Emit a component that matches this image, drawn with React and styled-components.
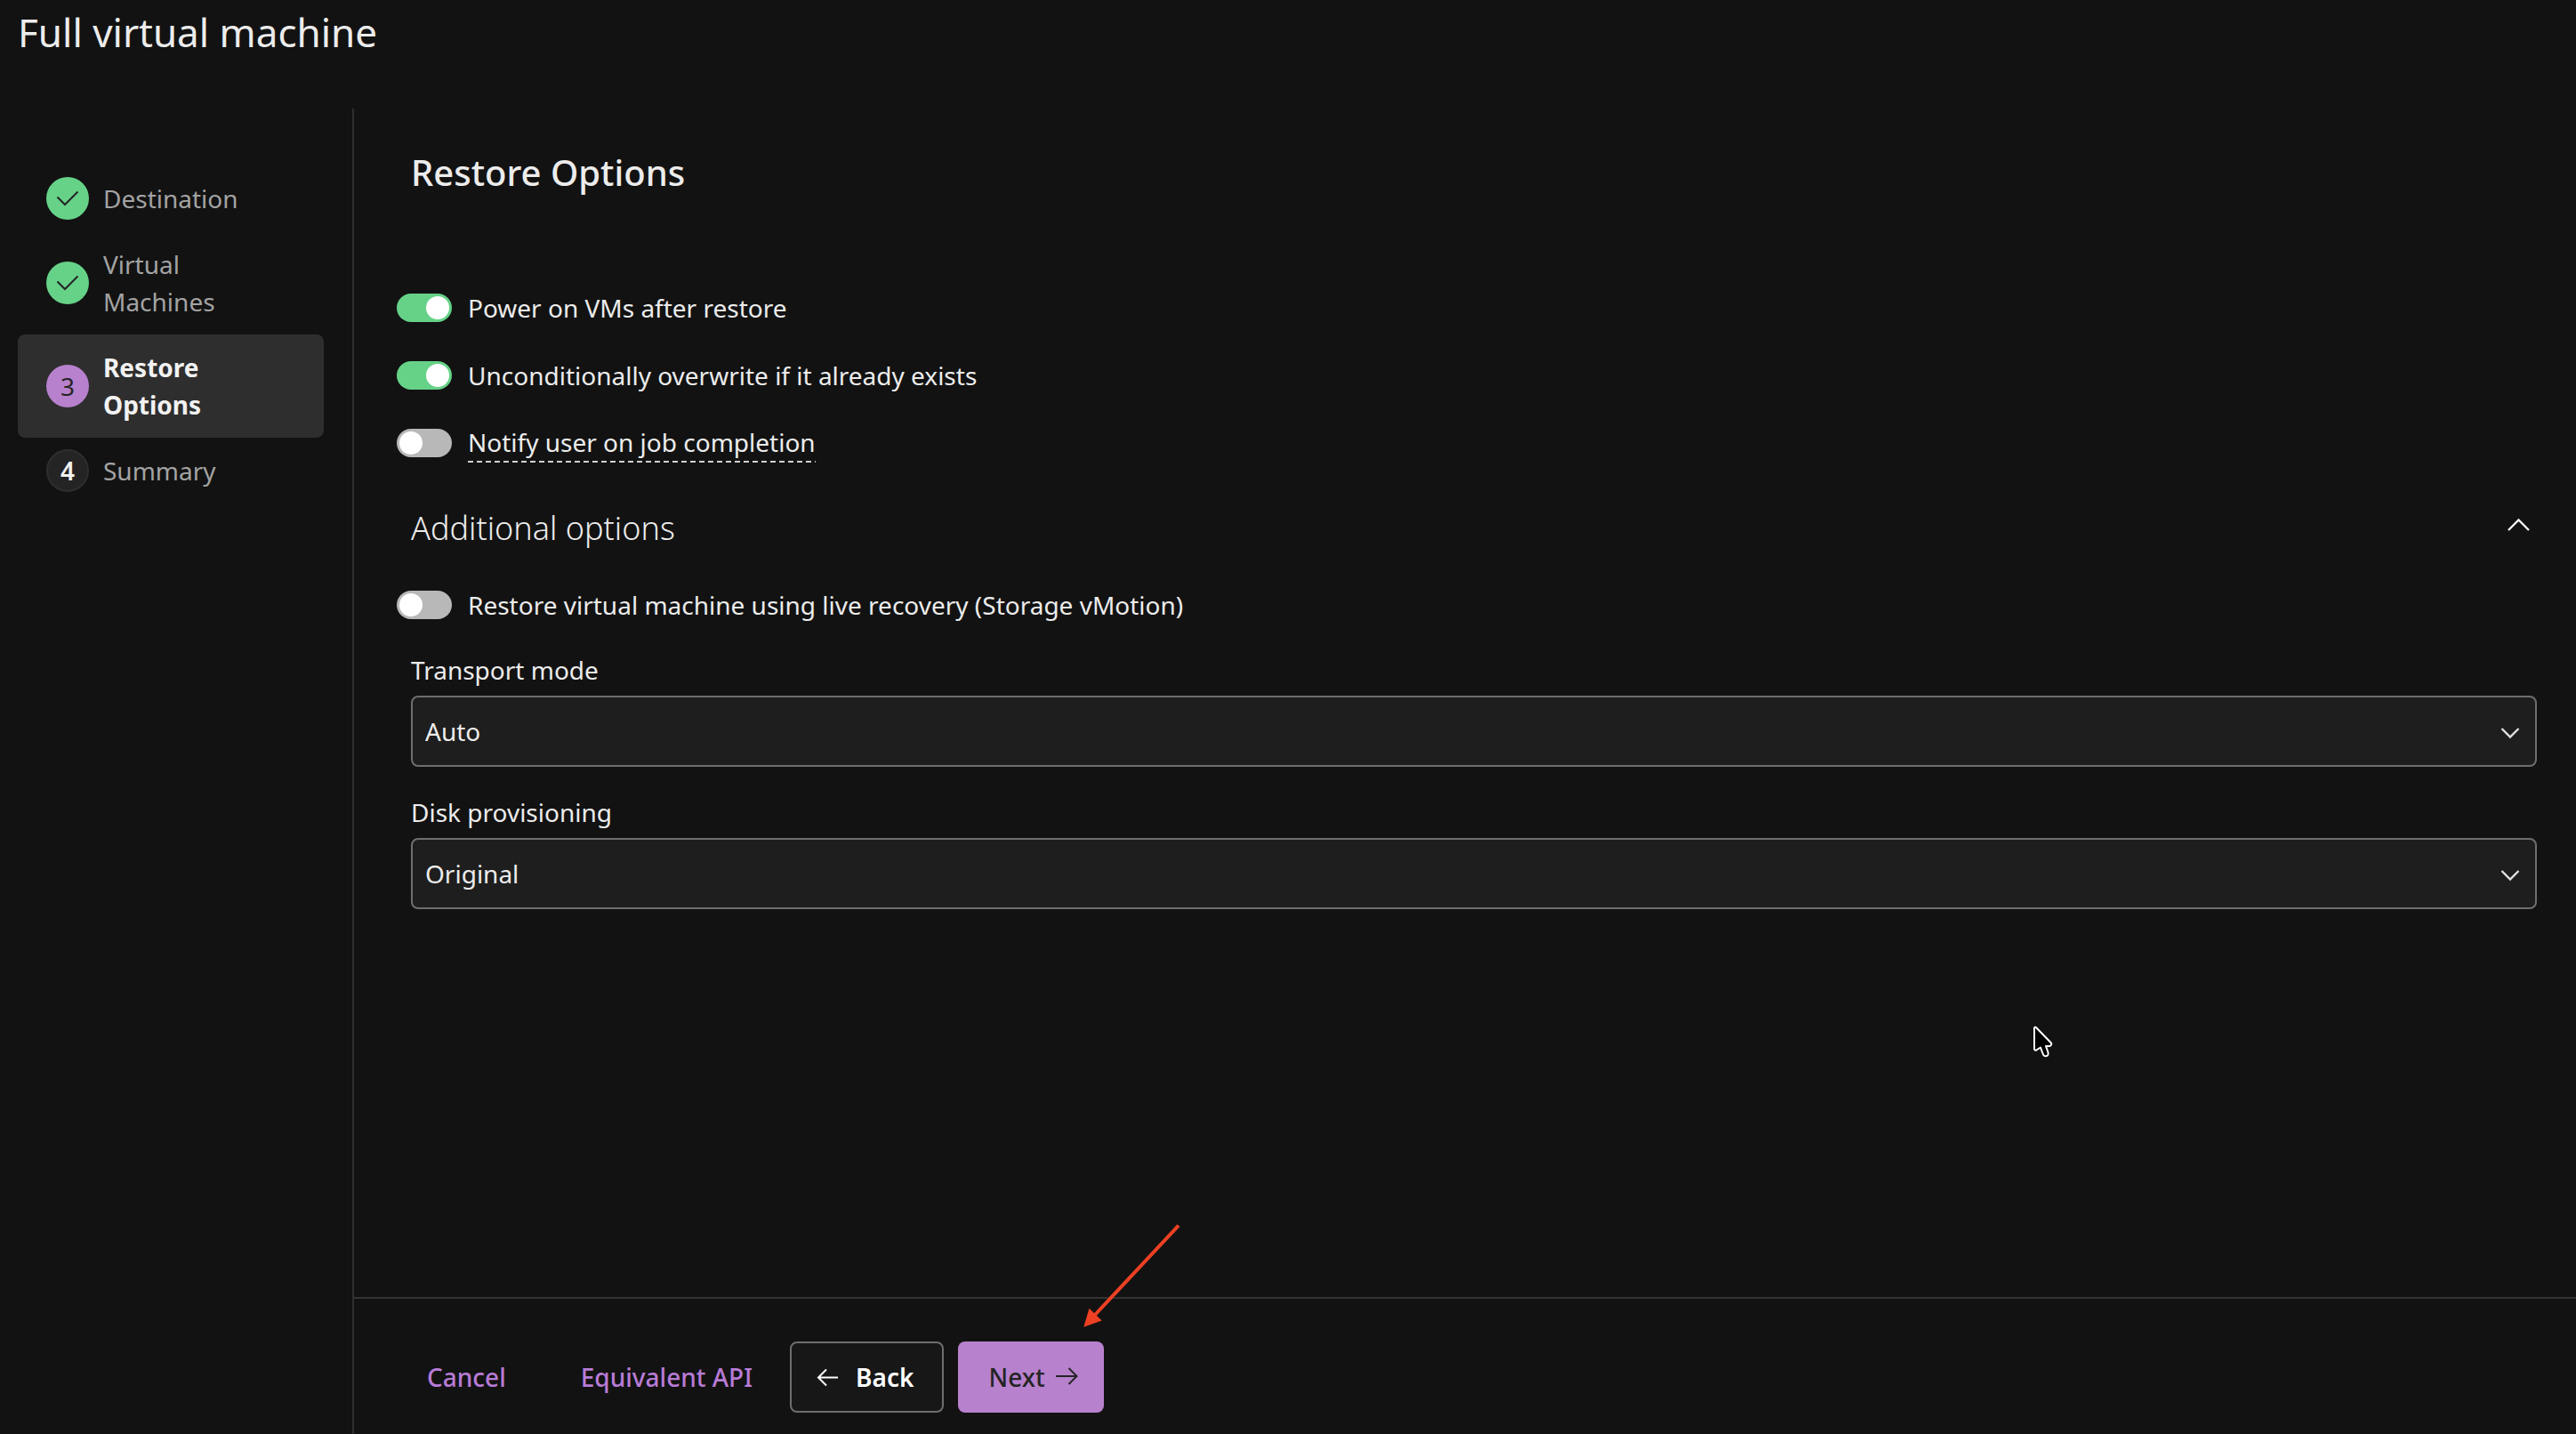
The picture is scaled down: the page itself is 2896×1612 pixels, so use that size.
import React, { useState } from "react";
import styled, { createGlobalStyle } from "styled-components";

const GlobalStyle = createGlobalStyle`
  * {
    box-sizing: border-box;
  }

  body {
    margin: 0;
    background-color: #121212;
    color: #ececec;
    font-family: "Noto Sans", sans-serif;
    font-size: 28px;
    line-height: 42px;
  }

  button, select {
    font: inherit;
    color: inherit;
  }
`;

const Page = styled.div`
  min-height: 100vh;
  display: flex;
  flex-direction: column;
`;

const Title = styled.h1`
  margin: 0;
  padding: 6px 20px 56px;
  font-size: 44px;
  line-height: 60px;
  font-weight: 400;
`;

const Body = styled.div`
  flex: 1;
  display: flex;
`;

const Sidebar = styled.nav`
  width: 398px;
  flex-shrink: 0;
  padding: 64px 32px 0 20px;
  border-right: 2px solid #2e2e2e;
`;

const StepList = styled.ol`
  margin: 0;
  padding: 0;
  list-style: none;
`;

const Step = styled.li`
  display: flex;
  align-items: center;
  gap: 16px;
  min-height: 74px;
  padding: 16px 48px 16px 32px;
  border-radius: 8px;
  background-color: ${(props) => (props.$active ? "#2e2e2e" : "transparent")};
  color: ${(props) => (props.$active ? "#f2f2f2" : "#a3a3a3")};
  font-weight: ${(props) => (props.$active ? 700 : 400)};
`;

const badgeColors = {
  done: "#66d288",
  active: "#b881ce",
  todo: "#242424",
};

const Badge = styled.span`
  width: 48px;
  height: 48px;
  margin: -4px 0;
  flex-shrink: 0;
  display: flex;
  align-items: center;
  justify-content: center;
  border-radius: 50%;
  border: 2px solid ${(props) => (props.$state === "todo" ? "#2e2e2e" : "transparent")};
  background: ${(props) => badgeColors[props.$state]} border-box;
  color: ${(props) => (props.$state === "todo" ? "#f2f2f2" : "#242424")};
  font-weight: ${(props) => (props.$state === "todo" ? 600 : 400)};
`;

const Main = styled.div`
  flex: 1;
  min-width: 0;
  display: flex;
  flex-direction: column;
`;

const Content = styled.main`
  flex: 1;
  padding: 44px 44px 0 64px;
`;

const Heading = styled.h2`
  margin: 0 0 103px;
  font-size: 40px;
  line-height: 56px;
  font-weight: 500;
`;

const ToggleGroup = styled.div`
  display: flex;
  flex-direction: column;
  gap: 34px;
  margin-left: -16px;
`;

const Toggle = styled.label`
  width: fit-content;
  height: 42px;
  display: flex;
  align-items: center;
  gap: 18px;
`;

const Switch = styled.input`
  appearance: none;
  width: 62px;
  height: 32px;
  margin: 0;
  padding: 3px;
  display: flex;
  border-radius: 16px;
  background-color: #b8b8b8;

  &::before {
    content: "";
    width: 26px;
    height: 26px;
    border-radius: 50%;
    background-color: white;
  }

  &:checked {
    justify-content: flex-end;
    background-color: #66d288;
  }
`;

const Hint = styled.span`
  height: 44px;
  background: repeating-linear-gradient(90deg, #d0d0d0 0 6px, transparent 6px 10px) bottom / 100% 2px no-repeat;
`;

const SectionHeader = styled.div`
  display: flex;
  justify-content: space-between;
  align-items: center;
  margin: 49px 0 39px;
`;

const SectionTitle = styled.h3`
  margin: 0;
  font-size: 36px;
  line-height: 52px;
  font-weight: 300;
`;

const CollapseButton = styled.button`
  display: flex;
  padding: 0 4px;
  border: none;
  background: none;
`;

const Fields = styled.div`
  display: flex;
  flex-direction: column;
  gap: 30px;
  padding: 31px 0;
`;

const FieldLabel = styled.label`
  display: block;
  margin-bottom: 8px;
`;

const SelectWrap = styled.div`
  position: relative;
`;

const Select = styled.select`
  appearance: none;
  display: block;
  width: 100%;
  height: 80px;
  padding: 0 56px 0 14px;
  border: 2px solid #6e6e6e;
  border-radius: 8px;
  background-color: #1e1e1e;
`;

const SelectIcon = styled.svg`
  position: absolute;
  right: 14px;
  top: 26px;
  pointer-events: none;
`;

const Footer = styled.footer`
  display: flex;
  align-items: center;
  gap: 16px;
  padding: 48px 64px 24px;
  border-top: 2px solid #333333;
`;

const Button = styled.button`
  height: 80px;
  display: flex;
  align-items: center;
  border: 2px solid transparent;
  border-radius: 8px;
  font-weight: 500;
  cursor: pointer;
`;

const TextButton = styled(Button)`
  padding: 0 16px;
  margin-right: 32px;
  background: none;
  color: #b87bd6;

  & + & {
    margin-right: 8px;
  }
`;

const BackButton = styled(Button)`
  gap: 16px;
  padding: 0 32px 0 24px;
  border-color: #6e6e6e;
  background-color: #171717;
  color: white;
  font-weight: 600;
`;

const NextButton = styled(Button)`
  gap: 8px;
  padding: 0 24px 0 32px;
  background: #b881ce border-box;
  color: #242424;
`;

const Pointer = styled.svg`
  position: absolute;
  left: 2284px;
  top: 1152px;
`;

const RedArrow = styled.svg`
  position: absolute;
  left: 1210px;
  top: 1370px;
`;

const steps = [
  { name: "Destination", state: "done" },
  { name: "Virtual Machines", state: "done" },
  { name: "Restore Options", state: "active" },
  { name: "Summary", state: "todo" },
];

function CheckIcon() {
  return (
    <svg width="26" height="18" viewBox="0 0 26 18" fill="none" stroke="#242424" strokeWidth="2">
      <path d="M1.5 7.5L10 16L24.5 1.5" />
    </svg>
  );
}

function Option({ label, hint, defaultChecked }) {
  return (
    <Toggle>
      <Switch type="checkbox" role="switch" defaultChecked={defaultChecked} />
      {hint ? <Hint>{label}</Hint> : <span>{label}</span>}
    </Toggle>
  );
}

function Dropdown({ id, label, options }) {
  return (
    <div>
      <FieldLabel htmlFor={id}>{label}</FieldLabel>
      <SelectWrap>
        <Select id={id}>
          {options.map((option) => (
            <option key={option}>{option}</option>
          ))}
        </Select>
        <SelectIcon width="32" height="32" viewBox="0 0 32 32" fill="none" stroke="#e0e0e0" strokeWidth="2.4">
          <path d="M6.5 11L16 20.5L25.5 11" />
        </SelectIcon>
      </SelectWrap>
    </div>
  );
}

function App() {
  const [open, setOpen] = useState(true);

  return (
    <Page>
      <GlobalStyle />
      <Title>Full virtual machine</Title>
      <Body>
        <Sidebar>
          <StepList>
            {steps.map((step, index) => (
              <Step key={step.name} $active={step.state === "active"}>
                <Badge $state={step.state}>
                  {step.state === "done" ? <CheckIcon /> : index + 1}
                </Badge>
                <span>{step.name}</span>
              </Step>
            ))}
          </StepList>
        </Sidebar>
        <Main>
          <Content>
            <Heading>Restore Options</Heading>
            <ToggleGroup>
              <Option label="Power on VMs after restore" defaultChecked />
              <Option label="Unconditionally overwrite if it already exists" defaultChecked />
              <Option label="Notify user on job completion" hint />
            </ToggleGroup>
            <SectionHeader>
              <SectionTitle>Additional options</SectionTitle>
              <CollapseButton aria-label="Additional options" aria-expanded={open} onClick={() => setOpen(!open)}>
                <svg width="32" height="32" viewBox="0 0 32 32" fill="none" stroke="#f2f2f2" strokeWidth="2.4">
                  <path d="M4 18L15.5 6.5L27 18" />
                </svg>
              </CollapseButton>
            </SectionHeader>
            {open && (
              <>
                <ToggleGroup>
                  <Option label="Restore virtual machine using live recovery (Storage vMotion)" />
                </ToggleGroup>
                <Fields>
                  <Dropdown id="transport" label="Transport mode" options={["Auto"]} />
                  <Dropdown id="disk" label="Disk provisioning" options={["Original"]} />
                </Fields>
              </>
            )}
          </Content>
          <Footer>
            <TextButton>Cancel</TextButton>
            <TextButton>Equivalent API</TextButton>
            <BackButton>
              <svg width="32" height="32" viewBox="0 0 32 32" fill="none" stroke="currentColor" strokeWidth="2">
                <path d="M28 16.5H6M15 7.500L6 16.5L15 25.5" />
              </svg>
              Back
            </BackButton>
            <NextButton>
              Next
              <svg width="32" height="32" viewBox="0 0 32 32" fill="none" stroke="currentColor" strokeWidth="2">
                <path d="M4 15H27M18.5 6L27.5 15L18.5 24" />
              </svg>
            </NextButton>
          </Footer>
        </Main>
      </Body>
      <Pointer width="26" height="38" viewBox="0 0 26 38" fill="black" stroke="white" strokeWidth="2" strokeLinejoin="round">
        <path d="M3 3.5V27.5Q4 29.5 6 28L10 25.5L13 33.5Q15 36.5 18 34.5Q19 33 18.5 31L16 24H20.5Q23 22.5 22 20.5L5 3Q3.5 2 3 3.5Z" />
      </Pointer>
      <RedArrow width="124" height="128" viewBox="0 0 124 128">
        <path d="M115 7.7L21 108" stroke="#ee4023" strokeWidth="4" fill="none" />
        <path d="M8.3 121.7L14.5 100.7L28.7 114.5Z" fill="#ee4023" />
      </RedArrow>
    </Page>
  );
}

export default App;
